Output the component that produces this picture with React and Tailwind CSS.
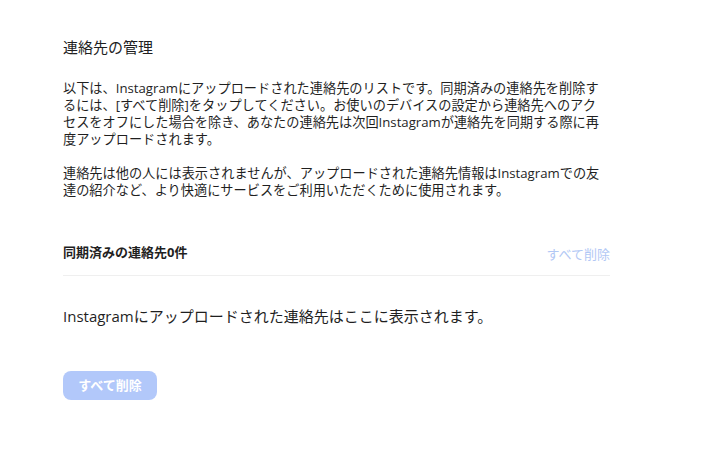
export default function App() {
  const font = {
    fontFamily: '"Open Sans", "Noto Sans CJK JP", sans-serif',
  };

  return (
    <div className="min-h-[470px] w-[720px] bg-white text-[#1f1f1f]" style={font}>
      <div className="w-[547px] pl-[63px] pt-[37px] box-content">
        <h2 className="text-[15px] leading-[20px]">連絡先の管理</h2>

        <p className="mt-[23px] text-[13.2px] leading-[17px]">
          以下は、Instagramにアップロードされた連絡先のリストです。同期済みの連絡先を削除す
          <br />
          るには、[すべて削除]をタップしてください。お使いのデバイスの設定から連絡先へのアク
          <br />
          セスをオフにした場合を除き、あなたの連絡先は次回Instagramが連絡先を同期する際に再
          <br />
          度アップロードされます。
        </p>

        <p className="mt-[17px] text-[13.2px] leading-[17px]">
          連絡先は他の人には表示されませんが、アップロードされた連絡先情報はInstagramでの友
          <br />
          達の紹介など、より快適にサービスをご利用いただくために使用されます。
        </p>

        <div className="mt-[42px] flex items-center justify-between border-b border-[#efefef] pb-[12px]">
          <span className="text-[13px] font-bold leading-[18px]">同期済みの連絡先0件</span>
          <button className="mt-[4px] text-[13px] leading-[18px] text-[#b2c8f5]">すべて削除</button>
        </div>

        <p className="mt-[30px] text-[15px] leading-[20px]">
          Instagramにアップロードされた連絡先はここに表示されます。
        </p>

        <button className="mt-[45px] h-[29px] w-[94px] rounded-[8px] bg-[#b2c8fa] text-[13px] font-bold text-white">
          すべて削除
        </button>
      </div>
    </div>
  );
}
